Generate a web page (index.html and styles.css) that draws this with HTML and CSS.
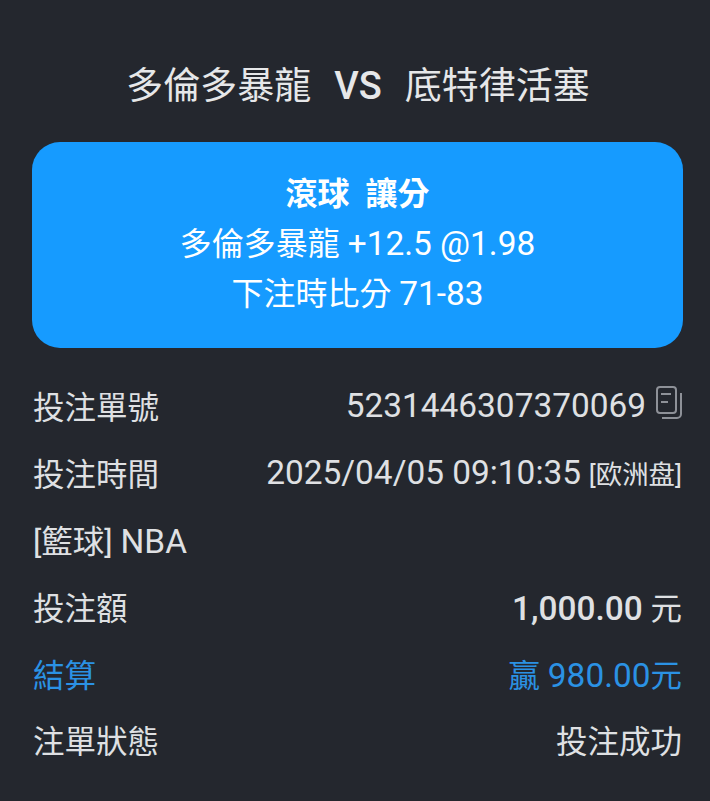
FILE: index.html
```html
<!DOCTYPE html>
<html lang="zh-Hant">
<head>
  <meta charset="UTF-8">
  <meta name="viewport" content="width=device-width, initial-scale=1.0">
  <title>注單詳情</title>
  <link rel="stylesheet" href="styles.css">
</head>
<body>
  <h1 class="match">多倫多暴龍<span class="vs">VS</span>底特律活塞</h1>
  <div class="bet-card">
    <div class="bet-type">滾球&nbsp; 讓分</div>
    <div>多倫多暴龍 <span class="num">+12.5 @1.98</span></div>
    <div>下注時比分 <span class="num">71-83</span></div>
  </div>
  <div class="rows">
    <div class="row">
      <span>投注單號</span>
      <span class="order-no">
        <span class="num">5231446307370069</span>
        <svg class="copy" width="26" height="33" viewBox="0 0 26 33" fill="none" stroke="#8e9198" stroke-width="2">
          <rect x="1" y="1" width="19" height="26" rx="3"/>
          <path d="M5 8H15M5 16H12"/>
          <path d="M25 7V28a4 4 0 0 1-4 4H6"/>
        </svg>
      </span>
    </div>
    <div class="row"><span>投注時間</span><span><span class="num">2025/04/05 09:10:35</span> <small>[欧洲盘]</small></span></div>
    <div class="row"><span>[籃球] <span class="num">NBA</span></span></div>
    <div class="row"><span>投注額</span><span><span class="num strong">1,000.00</span> 元</span></div>
    <div class="row blue"><span>結算</span><span>贏 <span class="num">980.00</span>元</span></div>
    <div class="row"><span>注單狀態</span><span>投注成功</span></div>
  </div>
</body>
</html>
```

FILE: styles.css
```css
* { box-sizing: border-box; margin: 0; padding: 0; }
html, body { width: 100%; height: 100%; }
body {
  background: #24272e; color: #dfe0e3; overflow: hidden;
  font-family: Roboto, "Noto Sans CJK TC", sans-serif;
  padding: 59px 28px 0 32px;
}
.match {
  font-size: 37px; font-weight: 400; line-height: 54px; text-align: center;
  color: #e6e7e9; margin-bottom: 28px; margin-right: -2px;
}
.vs { font-weight: 500; margin: 0 23px; font-size: 38px; }
.num { font-size: 33.4px; }
.strong { font-weight: 500; }
.bet-card {
  width: 651px; height: 206px; background: #169bff; border-radius: 28px;
  color: #fff; font-size: 32px; line-height: 50px; text-align: center;
  padding-top: 27px;
}
.bet-type { font-weight: 700; margin-bottom: 0; }
.rows { padding: 24px 0 0 1px; width: 650px; }
.row {
  display: flex; justify-content: space-between; align-items: center;
  height: 66.8px; font-size: 31.5px;
}
.order-no { display: flex; align-items: center; gap: 10px; }
.copy { margin-top: -6px; }
.row small { font-size: 26.4px; }
.blue { color: #2b92e4; }
```
